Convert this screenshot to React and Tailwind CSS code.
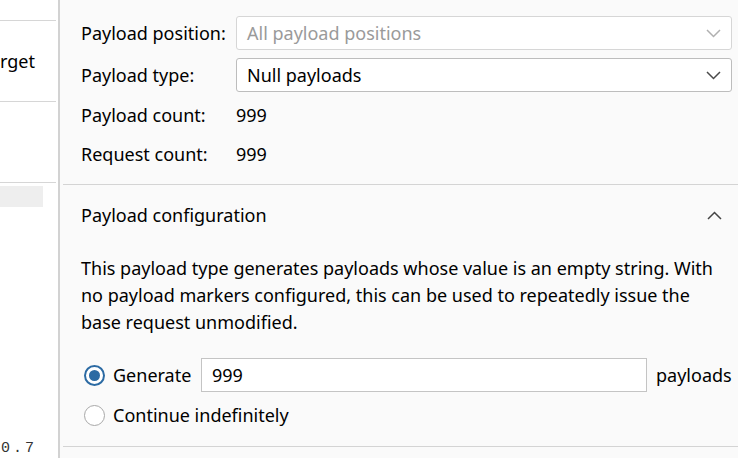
import React from "react";

const Chevron = ({ up = false, className = "" }) => (
  <svg width="15" height="9" viewBox="0 0 15 9" className={className}>
    <path
      d={up ? "M1 8 L7.5 1.5 L14 8" : "M1 1 L7.5 7.5 L14 1"}
      fill="none"
      stroke="currentColor"
      strokeWidth="1.5"
    />
  </svg>
);

const Radio = ({ checked }) =>
  checked ? (
    <span className="block w-[21px] h-[21px] rounded-full border-2 border-[#2b6aa3] bg-white">
      <span className="block w-[11px] h-[11px] m-[3px] rounded-full bg-[#2b6aa3]" />
    </span>
  ) : (
    <span className="block w-[21px] h-[21px] rounded-full border border-[#a8a8a8] bg-white" />
  );

const Select = ({ value, disabled }) => (
  <div
    className={`flex-1 h-[34px] flex items-center justify-between pl-[10px] pr-[10px] bg-white rounded-[3px] border ${
      disabled ? "border-[#d6d6d6] text-[#9a9a9a]" : "border-[#bdbdbd] text-black"
    }`}
  >
    <span>{value}</span>
    <Chevron className={disabled ? "text-[#b0b0b0]" : "text-[#4a4a4a]"} />
  </div>
);

export default function App() {
  return (
    <div
      className="w-[738px] h-[458px] flex overflow-hidden text-[18px] text-black"
      style={{ fontFamily: '"Noto Sans", "Open Sans", sans-serif' }}
    >
      <aside className="w-[60px] shrink-0 bg-white border-r-2 border-[#d2d2d2] flex flex-col">
        <div className="h-[20px]" />
        <div className="mr-[2px] border-t border-[#d6d6d6] h-[81px] flex items-center">
          <span className="whitespace-nowrap mt-[1px]">rget</span>
        </div>
        <div className="mr-[2px] border-t border-[#d6d6d6] h-[81px]" />
        <div className="mr-[2px] border-t border-[#d6d6d6] pt-[3px]">
          <div className="w-[43px] h-[21px] bg-[#eeeeee]" />
        </div>
        <div className="flex-1" />
        <div
          className="text-[15px] leading-[16px] text-[#333] pl-[1px] mb-[1px] tracking-[3px]"
          style={{ fontFamily: '"Liberation Mono", monospace' }}
        >
          0.7
        </div>
      </aside>

      <main className="flex-1 bg-[#fafafa] flex flex-col">
        <div className="pl-[21px] pr-[6px] pt-[16px]">
          <div className="flex items-center">
            <span className="w-[155px] shrink-0">Payload position:</span>
            <Select value="All payload positions" disabled />
          </div>
          <div className="flex items-center mt-[8px]">
            <span className="w-[155px] shrink-0">Payload type:</span>
            <Select value="Null payloads" />
          </div>
          <div className="flex items-center h-[34px] mt-[6px]">
            <span className="w-[155px] shrink-0">Payload count:</span>
            <span>999</span>
          </div>
          <div className="flex items-center h-[34px] mt-[5px]">
            <span className="w-[155px] shrink-0">Request count:</span>
            <span>999</span>
          </div>
        </div>

        <div className="ml-[3px] mt-[13px] border-t border-[#d4d4d4]" />

        <div className="pl-[21px] pr-[4px]">
          <div className="flex items-center justify-between h-[60px] pt-[1px]">
            <span>Payload configuration</span>
            <Chevron up className="text-[#444] mr-[12px]" />
          </div>
          <p className="leading-[27px] mt-[10px] whitespace-nowrap">
            This payload type generates payloads whose value is an empty string. With
            <br />
            no payload markers configured, this can be used to repeatedly issue the
            <br />
            base request unmodified.
          </p>
          <div className="flex items-center mt-[22px] h-[34px]">
            <span className="ml-[3px]">
              <Radio checked />
            </span>
            <span className="ml-[8px] w-[88px]">Generate</span>
            <div className="w-[446px] h-[34px] bg-white border border-[#c4c4c4] flex items-center pl-[10px]">
              999
            </div>
            <span className="ml-[9px] whitespace-nowrap">payloads</span>
          </div>
          <div className="flex items-center mt-[10px] h-[27px]">
            <span className="ml-[3px]">
              <Radio />
            </span>
            <span className="ml-[8px]">Continue indefinitely</span>
          </div>
        </div>

        <div className="ml-[3px] mt-[17px] border-t border-[#d4d4d4]" />
      </main>
    </div>
  );
}
